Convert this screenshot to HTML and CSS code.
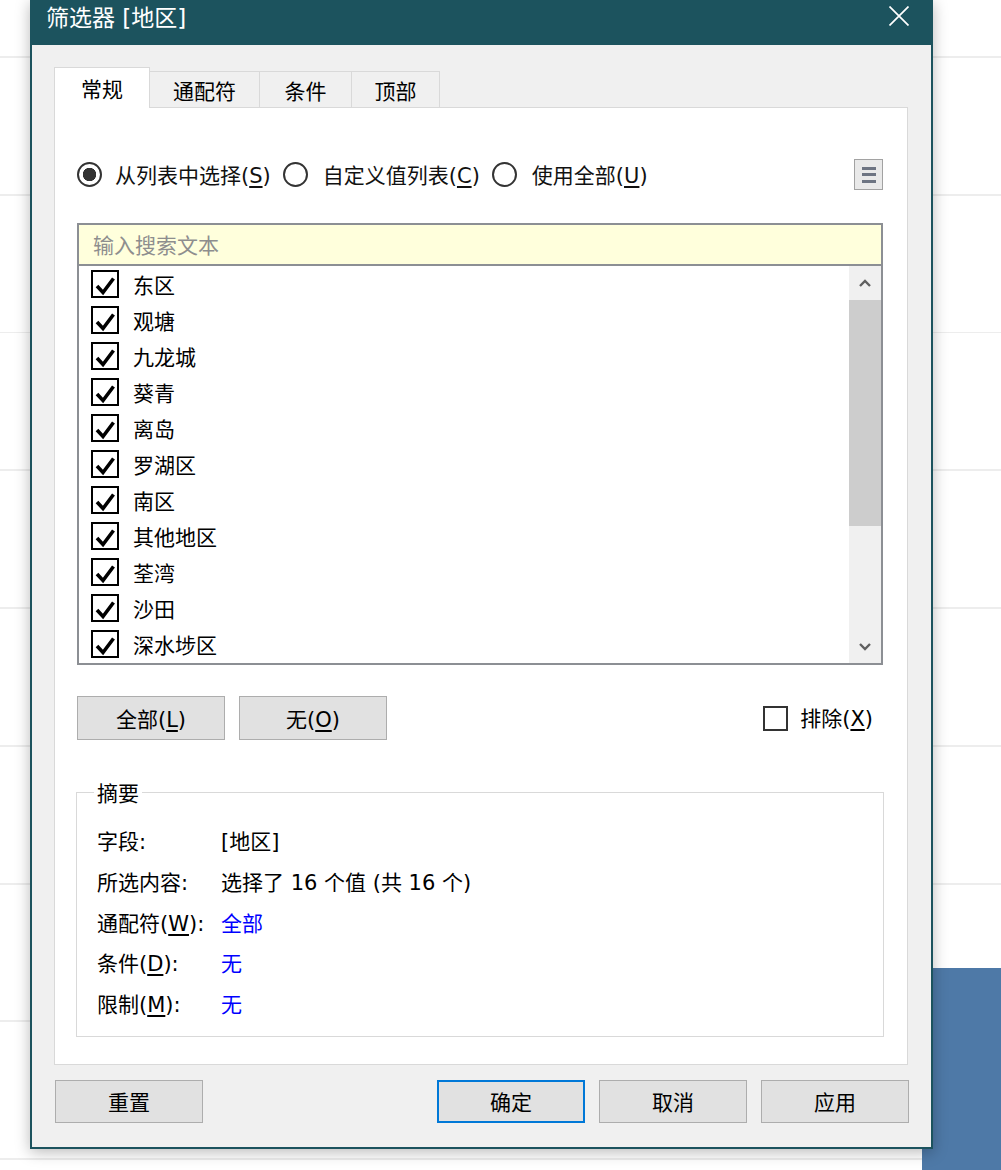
FILE: index.html
```html
<!DOCTYPE html>
<html lang="zh-CN">
<head>
<meta charset="utf-8">
<title>筛选器 [地区]</title>
<link rel="stylesheet" href="styles.css">
</head>
<body>
<div class="desk-block"></div>
<div class="dialog">
  <div class="titlebar">
    <span class="title">筛选器 [地区]</span>
    <svg class="close" width="20" height="20" viewBox="0 0 20 20"><path d="M0.5 0.5L19.5 19.5M19.5 0.5L0.5 19.5" stroke="#fff" stroke-width="1.7" fill="none"/></svg>
  </div>
  <div class="body">
    <div class="tabs">
      <div class="tab active">常规</div>
      <div class="tab w1">通配符</div>
      <div class="tab w2">条件</div>
      <div class="tab w3">顶部</div>
    </div>
    <div class="panel">
      <div class="radio-row">
        <div class="radios">
          <label class="radio first"><span class="dot on"></span><span class="rt">从列表中选择(<u>S</u>)</span></label>
          <label class="radio"><span class="dot"></span><span class="rt">自定义值列表(<u>C</u>)</span></label>
          <label class="radio"><span class="dot"></span><span class="rt">使用全部(<u>U</u>)</span></label>
        </div>
        <div class="menu-btn"><span></span><span></span><span></span></div>
      </div>
      <div class="listbox">
        <div class="search">输入搜索文本</div>
        <div class="list">
          <div class="items">
            <div class="item"><span class="cb"><svg width="24" height="24" viewBox="0 0 24 24"><path d="M4 14L10 20.5L20.5 6.5" stroke="#000" stroke-width="3.6" fill="none"/></svg></span><span class="name">东区</span></div>
            <div class="item"><span class="cb"><svg width="24" height="24" viewBox="0 0 24 24"><path d="M4 14L10 20.5L20.5 6.5" stroke="#000" stroke-width="3.6" fill="none"/></svg></span><span class="name">观塘</span></div>
            <div class="item"><span class="cb"><svg width="24" height="24" viewBox="0 0 24 24"><path d="M4 14L10 20.5L20.5 6.5" stroke="#000" stroke-width="3.6" fill="none"/></svg></span><span class="name">九龙城</span></div>
            <div class="item"><span class="cb"><svg width="24" height="24" viewBox="0 0 24 24"><path d="M4 14L10 20.5L20.5 6.5" stroke="#000" stroke-width="3.6" fill="none"/></svg></span><span class="name">葵青</span></div>
            <div class="item"><span class="cb"><svg width="24" height="24" viewBox="0 0 24 24"><path d="M4 14L10 20.5L20.5 6.5" stroke="#000" stroke-width="3.6" fill="none"/></svg></span><span class="name">离岛</span></div>
            <div class="item"><span class="cb"><svg width="24" height="24" viewBox="0 0 24 24"><path d="M4 14L10 20.5L20.5 6.5" stroke="#000" stroke-width="3.6" fill="none"/></svg></span><span class="name">罗湖区</span></div>
            <div class="item"><span class="cb"><svg width="24" height="24" viewBox="0 0 24 24"><path d="M4 14L10 20.5L20.5 6.5" stroke="#000" stroke-width="3.6" fill="none"/></svg></span><span class="name">南区</span></div>
            <div class="item"><span class="cb"><svg width="24" height="24" viewBox="0 0 24 24"><path d="M4 14L10 20.5L20.5 6.5" stroke="#000" stroke-width="3.6" fill="none"/></svg></span><span class="name">其他地区</span></div>
            <div class="item"><span class="cb"><svg width="24" height="24" viewBox="0 0 24 24"><path d="M4 14L10 20.5L20.5 6.5" stroke="#000" stroke-width="3.6" fill="none"/></svg></span><span class="name">荃湾</span></div>
            <div class="item"><span class="cb"><svg width="24" height="24" viewBox="0 0 24 24"><path d="M4 14L10 20.5L20.5 6.5" stroke="#000" stroke-width="3.6" fill="none"/></svg></span><span class="name">沙田</span></div>
            <div class="item"><span class="cb"><svg width="24" height="24" viewBox="0 0 24 24"><path d="M4 14L10 20.5L20.5 6.5" stroke="#000" stroke-width="3.6" fill="none"/></svg></span><span class="name">深水埗区</span></div>
          </div>
          <div class="scrollbar">
            <div class="sb-btn up"><svg width="12" height="8" viewBox="0 0 12 8"><path d="M1 7L6 2L11 7" stroke="#606060" stroke-width="2.4" fill="none"/></svg></div>
            <div class="thumb"></div>
            <div class="track"></div>
            <div class="sb-btn down"><svg width="12" height="8" viewBox="0 0 12 8"><path d="M1 1L6 6L11 1" stroke="#606060" stroke-width="2.4" fill="none"/></svg></div>
          </div>
        </div>
      </div>
      <div class="btn-row">
        <button class="btn">全部(<u>L</u>)</button>
        <button class="btn">无(<u>O</u>)</button>
        <label class="exclude"><span class="box"></span><span class="rt">排除(<u>X</u>)</span></label>
      </div>
      <fieldset class="summary">
        <legend>摘要</legend>
        <div class="rows">
          <span class="k">字段:</span><span class="v">[地区]</span>
          <span class="k">所选内容:</span><span class="v">选择了 16 个值 (共 16 个)</span>
          <span class="k">通配符(<u>W</u>):</span><span class="v link">全部</span>
          <span class="k">条件(<u>D</u>):</span><span class="v link">无</span>
          <span class="k">限制(<u>M</u>):</span><span class="v link">无</span>
        </div>
      </fieldset>
    </div>
    <div class="footer">
      <button class="btn fbtn">重置</button>
      <button class="btn fbtn primary">确定</button>
      <button class="btn fbtn">取消</button>
      <button class="btn fbtn">应用</button>
    </div>
  </div>
</div>
</body>
</html>
```

FILE: styles.css
```css
* { box-sizing: border-box; }
html, body { margin: 0; padding: 0; }
body {
  width: 1001px;
  height: 1170px;
  overflow: hidden;
  position: relative;
  background: repeating-linear-gradient(180deg, #ffffff 0 56px, #ededed 56px 58px, #ffffff 58px 137.75px);
  font-family: "DejaVu Sans", "Noto Sans CJK SC", sans-serif;
  font-size: 21px;
  color: #000;
}
u { text-decoration-thickness: 1.5px; text-underline-offset: 3px; }

.desk-block {
  position: absolute;
  left: 922px;
  top: 968px;
  width: 79px;
  height: 202px;
  background: #4e79a7;
}

.dialog {
  position: absolute;
  left: 30px;
  top: 0;
  width: 903px;
  height: 1149px;
  border: 2px solid #1c535e;
  border-top: 0;
  background: #f0f0f0;
  display: flex;
  flex-direction: column;
  box-shadow: 0 3px 14px rgba(0, 0, 0, 0.28);
}

.titlebar {
  flex: none;
  height: 45px;
  background: #1c535e;
  display: flex;
  justify-content: space-between;
  align-items: flex-start;
  padding: 0 22px 0 14px;
}
.title {
  color: #fff;
  font-size: 23px;
  line-height: 36px;
}
.close { margin-top: 6px; }

.body {
  flex: 1;
  display: flex;
  flex-direction: column;
  padding: 22px 23px 24px 22px;
}

.tabs {
  flex: none;
  display: flex;
  align-items: flex-end;
  height: 41px;
  margin-bottom: -1px;
  position: relative;
  z-index: 1;
}
.tab {
  height: 36px;
  margin-bottom: 1px;
  background: #f0f0f0;
  border-top: 1px solid #d9d9d9;
  border-right: 1px solid #d9d9d9;
  display: flex;
  justify-content: center;
  align-items: flex-start;
  padding-top: 7px;
  line-height: 26px;
}
.tab.active {
  width: 96px;
  height: 41px;
  margin-bottom: 0;
  background: #fff;
  border-left: 1px solid #d9d9d9;
  padding-top: 9px;
}
.tab.w1 { width: 110px; }
.tab.w2 { width: 92px; }
.tab.w3 { width: 88px; }

.panel {
  flex: 1;
  background: #fff;
  border: 1px solid #d9d9d9;
  padding: 0 24px 0 22px;
  display: flex;
  flex-direction: column;
}

.radio-row {
  margin-top: 51px;
  height: 31px;
  display: flex;
  justify-content: space-between;
  align-items: center;
}
.radios {
  display: flex;
  align-items: center;
  gap: 12px;
}
.radio {
  display: flex;
  align-items: center;
  gap: 15px;
  line-height: 26px;
  color: #111;
}
.radio.first { gap: 13px; }
.rt { padding-top: 2px; }
.dot {
  width: 25px;
  height: 25px;
  border-radius: 50%;
  border: 2px solid #333;
  background: #fff;
}
.dot.on {
  background: radial-gradient(circle, #333 0 6.4px, #fff 7px);
}
.menu-btn {
  width: 29px;
  height: 31px;
  border: 1px solid #a2a2a2;
  background: #e9e9e9;
  display: flex;
  flex-direction: column;
  align-items: center;
  justify-content: center;
  gap: 3.5px;
}
.menu-btn span {
  width: 14px;
  height: 3px;
  background: #6d7482;
}

.listbox {
  margin-top: 33px;
  border: 2px solid #8c8f94;
}
.search {
  height: 41px;
  background: #ffffdc;
  border-bottom: 2px solid #8c8f94;
  padding: 4px 0 0 14px;
  line-height: 35px;
  color: #8e8e8e;
}
.list {
  display: flex;
  height: 397px;
}
.items { flex: 1; }
.item {
  height: 36px;
  display: flex;
  align-items: center;
  gap: 14px;
  padding-left: 12px;
  line-height: 26px;
}
.name { padding-top: 4px; }
.cb {
  width: 28px;
  height: 28px;
  border: 2px solid #000;
  display: flex;
}
.scrollbar {
  width: 32px;
  background: #f0f0f0;
  display: flex;
  flex-direction: column;
}
.sb-btn {
  display: flex;
  align-items: center;
  justify-content: center;
}
.sb-btn.up { height: 34px; padding-bottom: 1px; }
.sb-btn.down { height: 34px; padding-top: 2px; }
.thumb { height: 226px; background: #cdcdcd; }
.track { flex: 1; }

.btn-row {
  margin-top: 31px;
  height: 44px;
  display: flex;
  align-items: center;
  gap: 14px;
}
.btn {
  width: 148px;
  height: 44px;
  padding: 3px 0 0 0;
  border: 1px solid #adadad;
  background: #e1e1e1;
  font-family: inherit;
  font-size: 21px;
  color: #000;
  line-height: 26px;
}
.exclude {
  margin-left: auto;
  margin-right: 10px;
  display: flex;
  align-items: center;
  gap: 12px;
  line-height: 26px;
}
.exclude .box {
  width: 25px;
  height: 25px;
  border: 2px solid #333;
  background: #fff;
}

.summary {
  margin: 38px -1px 0 -1px;
  border: 1px solid #d9d9d9;
  padding: 0 17px 10px 17px;
  min-width: 0;
}
.summary legend {
  padding: 4px 3px 0 3px;
  line-height: 24px;
}
.rows {
  margin-top: 16px;
  padding-left: 3px;
  display: grid;
  grid-template-columns: 124px 1fr;
  line-height: 40.75px;
}
.link { color: #0000ff; }

.footer {
  flex: none;
  margin: 15px -1px 0 1px;
  height: 43px;
  display: flex;
  gap: 14px;
}
.fbtn { height: 43px; }
.primary {
  margin-left: auto;
  border: 2px solid #0078d7;
}
```
